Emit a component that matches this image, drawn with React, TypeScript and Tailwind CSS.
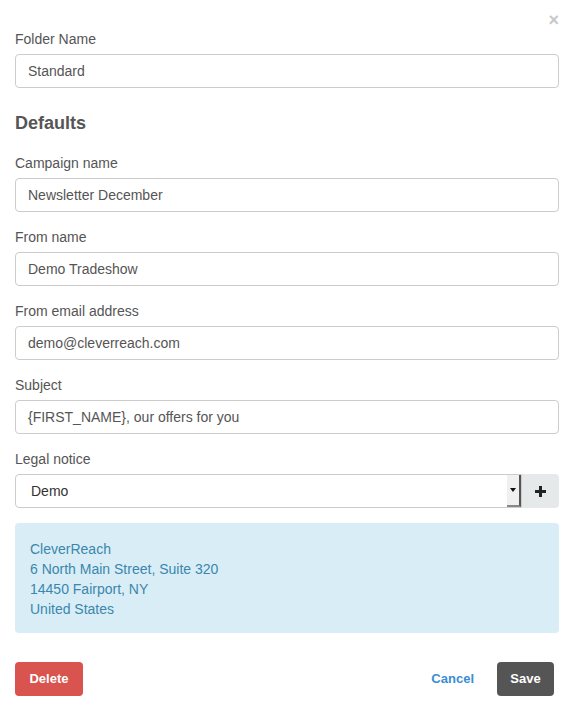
import React from "react";

const font = { fontFamily: '"Liberation Sans", Arial, Helvetica, sans-serif' };

function Field({ label, value }: { label: string; value: string }) {
  return (
    <div className="mb-[15px]">
      <div className="text-[14px] leading-[20px] text-[#555] mb-[5px]">{label}</div>
      <div className="h-[34px] rounded-[4px] border border-[#ccc] bg-white px-[12px] flex items-center text-[14px] text-[#555]">
        {value}
      </div>
    </div>
  );
}

export default function App() {
  return (
    <div style={font} className="w-[569px] h-[707px] bg-white relative pl-[15px] pr-[10px] pt-[29px]">
      <div className="absolute right-[10px] top-[11px] text-[18px] leading-[18px] font-bold text-[#c8c8c8]">×</div>
      <div className="mb-[15px] mr-0">
        <div className="text-[14px] leading-[20px] text-[#555] mb-[5px]">Folder Name</div>
        <div className="h-[34px] rounded-[4px] border border-[#ccc] bg-white px-[12px] flex items-center text-[14px] text-[#555]">
          Standard
        </div>
      </div>
      <div className="mt-[23px] mb-[18px] text-[18px] leading-[24px] font-bold text-[#555]">Defaults</div>
      <Field label="Campaign name" value="Newsletter December" />
      <Field label="From name" value="Demo Tradeshow" />
      <Field label="From email address" value="demo@cleverreach.com" />
      <Field label="Subject" value="{FIRST_NAME}, our offers for you" />
      <div className="mb-[15px]">
        <div className="text-[14px] leading-[20px] text-[#555] mb-[5px]">Legal notice</div>
        <div className="flex h-[34px]">
          <div className="flex-1 flex items-stretch rounded-l-[4px] border border-[#ccc] bg-white">
            <div className="flex-1 flex items-center pl-[15px] text-[14px] text-[#333]">Demo</div>
            <div className="w-[14px] bg-[#f0f0f0] border-r-2 border-b-2 border-r-[#555] border-b-[#888] flex items-center justify-center">
              <svg width="6" height="4" viewBox="0 0 6 4"><path d="M0 0h6L3 4z" fill="#111" /></svg>
            </div>
          </div>
          <div className="w-[37px] bg-[#e6e9ea] rounded-r-[4px] flex items-center justify-center">
            <svg width="11" height="11" viewBox="0 0 11 11"><path d="M4 0h3v4h4v3H7v4H4V7H0V4h4z" fill="#222" /></svg>
          </div>
        </div>
      </div>
      <div className="rounded-[4px] bg-[#d9edf7] px-[15px] pt-[16px] pb-[14px] text-[14px] leading-[20px] text-[#3a87ad]">
        <div>CleverReach</div>
        <div>6 North Main Street, Suite 320</div>
        <div>14450 Fairport, NY</div>
        <div>United States</div>
      </div>
      <div className="mt-[29px] flex items-center pr-[5px]">
        <div className="h-[34px] w-[68px] rounded-[4px] bg-[#d9534f] text-white font-bold text-[13px] flex items-center justify-center">Delete</div>
        <div className="flex-1" />
        <div className="text-[13px] font-bold text-[#3b8dd4] mr-[23px]">Cancel</div>
        <div className="h-[34px] w-[57px] rounded-[4px] bg-[#555] text-white font-bold text-[13px] flex items-center justify-center">Save</div>
      </div>
    </div>
  );
}
